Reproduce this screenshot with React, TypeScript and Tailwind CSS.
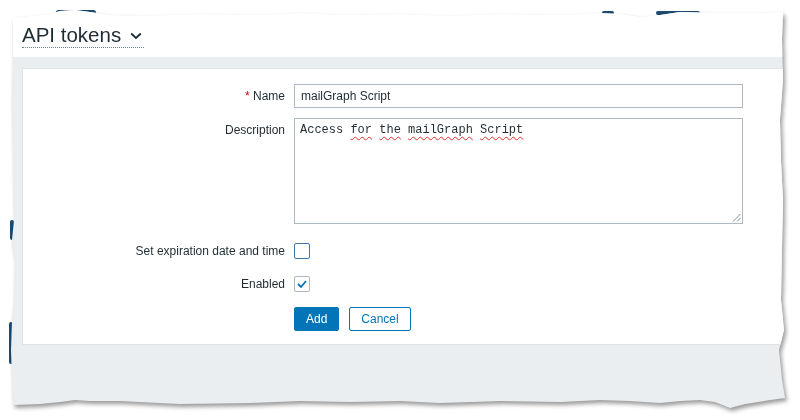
import React from "react";

function Checkbox({ checked, className }: { checked?: boolean; className: string }) {
  return (
    <div className={`w-[16px] h-[16px] rounded-[2px] border bg-white flex items-center justify-center ${className}`}>
      {checked && (
        <svg width="12" height="12" viewBox="0 0 12 12">
          <polyline points="2,6 5,9 10,3" fill="none" stroke="#0275b8" strokeWidth="1.8" />
        </svg>
      )}
    </div>
  );
}

const Squiggle = ({ children }: { children: React.ReactNode }) => (
  <span className="underline decoration-wavy decoration-[#e0302a] decoration-1 underline-offset-[3px]">{children}</span>
);

export default function App() {
  return (
    <div className="relative w-[800px] h-[420px] bg-white overflow-hidden pt-[8px] pl-[10px] font-['Liberation_Sans',Arial,sans-serif] text-[#1f2c33]">
      <div className="absolute left-[56px] top-[10px] w-[40px] h-[5px] rounded-full bg-[#1d4a70] z-0" />
      <div className="absolute left-[602px] top-[11px] w-[12px] h-[4px] rounded-full bg-[#1d4a70] z-0" />
      <div className="absolute left-[656px] top-[11px] w-[44px] h-[4px] rounded-full bg-[#1d4a70] z-0" />
      <div className="absolute left-[10px] top-[220px] w-[4px] h-[20px] rounded-full bg-[#1d4a70] z-0" />
      <div className="absolute left-[9px] top-[322px] w-[4px] h-[42px] rounded-full bg-[#1d4a70] z-0" />
      <div className="relative z-10 w-[778px] h-[404px] [filter:drop-shadow(2px_3px_2px_rgba(0,0,0,0.4))]">
        <div className="w-full h-full bg-[#ebeef0] flex flex-col [clip-path:polygon(3px_10px,20px_8px,40px_6px,50px_3px,65px_2px,80px_4px,100px_7px,130px_8px,190px_6px,250px_7px,290px_5px,330px_7px,390px_6px,440px_8px,490px_6px,550px_7px,590px_5px,610px_6px,630px_9px,650px_7px,670px_4px,710px_5px,750px_5px,773px_4px,772px_32px,773px_72px,770px_112px,771px_152px,773px_192px,772px_242px,771px_292px,774px_322px,769px_342px,772px_372px,775px_390px,760px_392px,735px_396px,720px_400px,705px_394px,690px_392px,670px_393px,650px_395px,620px_393px,590px_392px,550px_394px,490px_393px,430px_395px,390px_393px,340px_394px,290px_393px,240px_395px,170px_396px,110px_393px,80px_393px,65px_392px,50px_394px,30px_396px,3px_397px,2px_372px,1px_342px,2px_312px,4px_292px,5px_252px,2px_232px,4px_212px,3px_142px,2px_92px,3px_52px)]">
          <div className="h-[49px] bg-white pt-[15px] pl-[12px] flex items-start">
            <div className="flex items-center border-b border-dotted border-[#6f7f88] pr-[2px]">
              <span className="text-[20.5px] leading-[24px]">API tokens</span>
              <svg className="ml-[9px] mt-[2px]" width="12" height="8" viewBox="0 0 12 8">
                <polyline points="1.2,1.5 6,6 10.8,1.5" fill="none" stroke="#1f2c33" strokeWidth="1.8" />
              </svg>
            </div>
          </div>
          <div className="h-[11px]" />
          <div className="ml-[12px] h-[277px] bg-white border border-[#dfe4e7] border-r-0 pt-[15px] flex flex-col text-[12px] leading-[14px]">
            <div className="flex items-center h-[24px]">
              <div className="w-[262px] text-right">
                <span className="text-[#d40000]">*</span> Name
              </div>
              <div className="ml-[9px] w-[449px] h-[24px] border border-[#acbbc2] bg-white pl-[6px] flex items-center">
                mailGraph Script
              </div>
            </div>
            <div className="flex mt-[10px]">
              <div className="w-[262px] text-right pt-[5px]">Description</div>
              <div className="relative ml-[9px] w-[449px] h-[106px] border border-[#acbbc2] bg-white pl-[5px] pt-[4px] font-['Liberation_Mono','Courier_New',monospace] text-[12px] leading-[14px] whitespace-pre">
                Access <Squiggle>for</Squiggle> <Squiggle>the</Squiggle> <Squiggle>mailGraph</Squiggle> <Squiggle>Script</Squiggle>
                <svg className="absolute right-[1px] bottom-[1px]" width="9" height="9" viewBox="0 0 9 9">
                  <line x1="8.5" y1="1" x2="1" y2="8.5" stroke="#8a8a8a" strokeWidth="1" />
                  <line x1="8.5" y1="5" x2="5" y2="8.5" stroke="#8a8a8a" strokeWidth="1" />
                </svg>
              </div>
            </div>
            <div className="flex items-center h-[24px] mt-[15px]">
              <div className="w-[262px] text-right">Set expiration date and time</div>
              <div className="ml-[9px]">
                <Checkbox className="border-[#3e78a8]" />
              </div>
            </div>
            <div className="flex items-center h-[24px] mt-[9px]">
              <div className="w-[262px] text-right">Enabled</div>
              <div className="ml-[9px]">
                <Checkbox checked className="border-[#acbbc2]" />
              </div>
            </div>
            <div className="flex items-center mt-[11px] pl-[271px] gap-[10px]">
              <button className="h-[24px] px-[11px] rounded-[2px] bg-[#0275b8] border border-[#0275b8] text-white text-[12px]">
                Add
              </button>
              <button className="h-[24px] px-[11px] rounded-[2px] bg-white border border-[#0275b8] text-[#0275b8] text-[12px]">
                Cancel
              </button>
            </div>
          </div>
        </div>
      </div>
    </div>
  );
}
